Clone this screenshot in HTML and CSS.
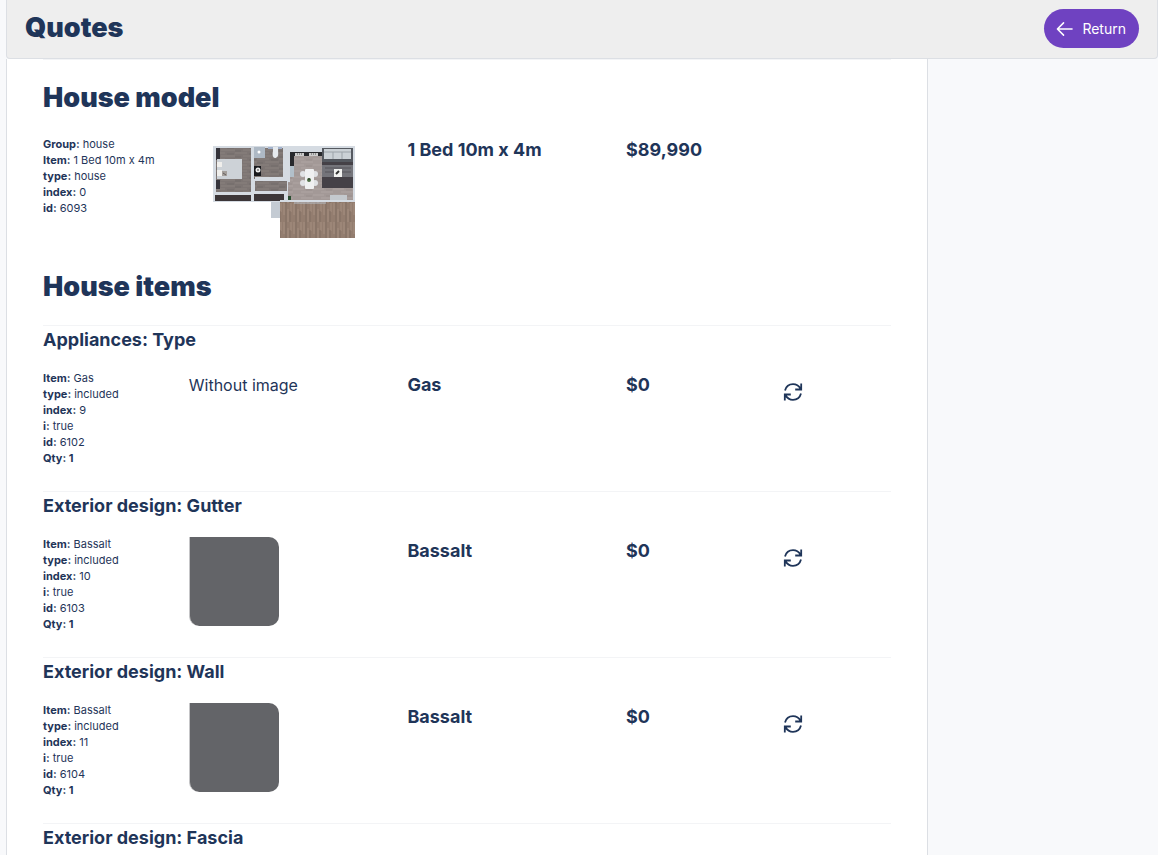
FILE: index.html
```html
<!DOCTYPE html>
<html lang="en">
<head>
<meta charset="utf-8">
<meta name="viewport" content="width=device-width, initial-scale=1">
<title>Quotes</title>
<link rel="stylesheet" href="styles.css">
</head>
<body>
<svg class="defs" aria-hidden="true">
  <symbol id="refresh" viewBox="0 0 20 20">
    <path d="M2 8.500C3 4.800 6 2.200 10 2.200c3.200 0 5.800 1.600 7.500 4.600M18.200 1.500V7.500H12.200M18 11.500C17 15.200 14 17.800 10 17.800c-3.200 0-5.800-1.600-7.500-4.600M1.800 18.500V12.500H7.800" fill="none" stroke="currentColor" stroke-width="1.800"/>
  </symbol>
</svg>
<header class="topbar">
  <h1 class="heading">Quotes</h1>
  <button class="return" type="button">
    <svg class="return-icon" viewBox="0 0 18 16" aria-hidden="true"><path d="M17 8H2M8 1.500 1.500 8 8 14.500" fill="none" stroke="currentColor" stroke-width="1.600" stroke-linecap="round" stroke-linejoin="round"/></svg>
    Return
  </button>
</header>
<main class="panel">
  <section class="model">
    <h2 class="heading">House model</h2>
    <div class="row">
      <ul class="details">
        <li><b>Group:</b> house</li>
        <li><b>Item:</b> 1 Bed 10m x 4m</li>
        <li><b>type:</b> house</li>
        <li><b>index:</b> 0</li>
        <li><b>id:</b> 6093</li>
      </ul>
      <div class="plan-cell">
        <svg class="plan" viewBox="0 0 142 92" role="img" aria-label="Floor plan">
          <defs>
            <pattern id="floor" width="22" height="6" patternUnits="userSpaceOnUse">
              <rect width="22" height="6" fill="#7d7573"/><path d="M0 1h12M8 4h14" stroke="#857d7a" stroke-width="1.500"/><path d="M14 2h7M0 5h6" stroke="#716a68"/>
            </pattern>
            <pattern id="light-floor" width="20" height="6" patternUnits="userSpaceOnUse">
              <rect width="20" height="6" fill="#a39997"/><path d="M0 1h11M8 4h12" stroke="#aba19f" stroke-width="1.500"/><path d="M13 2h6" stroke="#9a908e"/>
            </pattern>
            <pattern id="deck" width="10" height="19" patternUnits="userSpaceOnUse">
              <rect width="10" height="19" fill="#937d6f"/><path d="M1 0v12M5 6v13M8 0v9" stroke="#a58f80"/><path d="M3 0v19M7 8v11" stroke="#806c61"/>
            </pattern>
          </defs>
          <rect x="58" y="56" width="10" height="16" fill="#c4cbd3"/>
          <path d="M0 0H142V56H0Z" fill="#d5dbe2"/>
          <rect x="3" y="2" width="35" height="44" fill="url(#floor)"/>
          <path d="M3 2h4v12H3zM3 34h4v9H3z" fill="#35343b"/>
          <rect x="4" y="13" width="25" height="20" fill="#cdd2d7"/>
          <path d="M4 16h5v5H4zM4 24h5v6H4z" fill="#f0efec"/>
          <path d="M9 25h5v5H9z" fill="#a49f9b"/><path d="M10 27l3 2" stroke="#655f5d"/>
          <rect x="2" y="49" width="37" height="6" fill="#3c3638"/>
          <rect x="41" y="2" width="31" height="31" fill="url(#floor)"/>
          <rect x="41" y="1" width="11" height="11" fill="#aeb9c5"/><circle cx="46" cy="6" r="1.500" fill="#fff"/>
          <rect x="55" y="1" width="14" height="2" fill="#a4b3cc"/><path d="M60 1h5v4c1 5-1 7-3 7s-3-3-2-7z" fill="#e7ebef"/>
          <path d="M41 20h7v10h-7z" fill="#18191d"/><circle cx="45" cy="24" r="2.500" fill="#eee"/><circle cx="45" cy="24" r="1" fill="#777"/>
          <rect x="42" y="35" width="32" height="10" fill="url(#floor)"/>
          <rect x="41" y="48" width="30" height="7" fill="#3c3638"/>
          <path d="M70 0h5v33h-5zM42 31h32v3H42zM38 0h3v56h-3zM72 45h3v11h-3z" fill="#d5dbe2"/>
          <path d="M77 6H140V54H75V36H77Z" fill="url(#light-floor)"/>
          <path d="M77 6h32v4H81v10h-4z" fill="#28292d"/>
          <path d="M77 20h4v11h-4z" fill="#b2c0ca"/>
          <path d="M82 7h9v3h-9zM96 7h9v3h-9z" fill="#ccc"/><path d="M84 8h5M98 8h5" stroke="#555" stroke-dasharray="1"/>
          <rect x="109" y="2" width="31" height="14" fill="#555960"/>
          <rect x="111" y="3" width="27" height="10" fill="#cbd1d6"/><path d="M111 6h27M120 6v7M129 6v7" stroke="#9ca3a9"/>
          <rect x="109" y="16" width="31" height="26" fill="#74747a"/><path d="M109 16h31v3h-31zM109 31h31v11h-31z" fill="#454147"/><path d="M112 22h26M112 26h26" stroke="#65646a" stroke-width="2"/>
          <rect x="121" y="23" width="8" height="8" fill="#f3f3f1"/><path d="M123 28l3-3" stroke="#333" stroke-width="2"/>
          <g fill="#e0e2e5"><circle cx="90" cy="28" r="3"/><circle cx="90" cy="37" r="3"/><circle cx="102" cy="28" r="3"/><circle cx="102" cy="37" r="3"/></g><rect x="92" y="23" width="9" height="20" rx="1" fill="#eff0f1"/>
          <circle cx="96" cy="34" r="2" fill="#4d6d45"/><path d="M95 33h2" stroke="#182d18"/>
          <rect x="117" y="49" width="17" height="5" fill="#c4c9ce"/>
          <rect x="75" y="50" width="3" height="4" fill="#294d30"/>
          <rect x="67" y="56" width="75" height="36" fill="url(#deck)"/>
          <path d="M67 55h75" stroke="#d5dbe2" stroke-width="2"/><path d="M81 57h32" stroke="#b8c0c8"/>
        </svg>
      </div>
      <p class="name">1 Bed 10m x 4m</p>
      <p class="name">$89,990</p>
    </div>
  </section>
  <h2 class="heading items-title">House items</h2>
  <section class="item">
    <h3 class="item-title">Appliances: Type</h3>
    <div class="row">
      <ul class="details">
        <li><b>Item:</b> Gas</li>
        <li><b>type:</b> included</li>
        <li><b>index:</b> 9</li>
        <li><b>i:</b> true</li>
        <li><b>id:</b> 6102</li>
        <li><b>Qty: 1</b></li>
      </ul>
      <p class="no-image">Without image</p>
      <p class="name">Gas</p>
      <p class="name">$0</p>
      <button class="swap" type="button" aria-label="Change item"><svg viewBox="0 0 20 20" aria-hidden="true"><use href="#refresh"/></svg></button>
    </div>
  </section>
  <section class="item">
    <h3 class="item-title">Exterior design: Gutter</h3>
    <div class="row">
      <ul class="details">
        <li><b>Item:</b> Bassalt</li>
        <li><b>type:</b> included</li>
        <li><b>index:</b> 10</li>
        <li><b>i:</b> true</li>
        <li><b>id:</b> 6103</li>
        <li><b>Qty: 1</b></li>
      </ul>
      <div class="swatch" role="img" aria-label="Bassalt"></div>
      <p class="name">Bassalt</p>
      <p class="name">$0</p>
      <button class="swap" type="button" aria-label="Change item"><svg viewBox="0 0 20 20" aria-hidden="true"><use href="#refresh"/></svg></button>
    </div>
  </section>
  <section class="item">
    <h3 class="item-title">Exterior design: Wall</h3>
    <div class="row">
      <ul class="details">
        <li><b>Item:</b> Bassalt</li>
        <li><b>type:</b> included</li>
        <li><b>index:</b> 11</li>
        <li><b>i:</b> true</li>
        <li><b>id:</b> 6104</li>
        <li><b>Qty: 1</b></li>
      </ul>
      <div class="swatch" role="img" aria-label="Bassalt"></div>
      <p class="name">Bassalt</p>
      <p class="name">$0</p>
      <button class="swap" type="button" aria-label="Change item"><svg viewBox="0 0 20 20" aria-hidden="true"><use href="#refresh"/></svg></button>
    </div>
  </section>
  <section class="item">
    <h3 class="item-title">Exterior design: Fascia</h3>
  </section>
</main>
</body>
</html>
```
FILE: styles.css
```css
* { box-sizing: border-box; }
html { overflow: hidden; }
body {
  margin: 0;
  padding-left: 6px;
  height: 100vh;
  overflow: hidden;
  display: flex;
  flex-direction: column;
  background: #f8f9fb;
  color: #1f3559;
  font-family: Inter, "Liberation Sans", sans-serif;
  font-optical-sizing: none;
  font-size: 16px;
}
h1, h2, h3, p, ul { margin: 0; padding: 0; }
.defs { display: none; }
.topbar {
  flex: none;
  display: flex;
  align-items: center;
  justify-content: space-between;
  padding: 8px 18px 10px;
  background: #eee;
  border: 1px solid #dcdfe4;
  border-top: 0;
  border-radius: 0 0 4px 4px;
}
.heading {
  font-size: 27px;
  line-height: 36px;
  font-weight: 900;
}
.return {
  display: flex;
  align-items: center;
  gap: 9px;
  height: 39px;
  margin-top: 1px;
  padding: 0 13px 0 12px;
  border: 0;
  border-radius: 20px;
  background: #6f42c1;
  color: #fff;
  font: 400 14px/20px Inter, "Liberation Sans", sans-serif;
}
.return-icon { width: 17px; height: 16px; }
.panel {
  flex: 1;
  min-height: 0;
  overflow: hidden;
  width: 80%;
  padding: 0 36px;
  background: #fff;
  border: 1px solid #dcdfe4;
  border-width: 0 1px;
}
.model {
  padding-top: 20px;
  border-top: 1px solid #f3f4f6;
}
.row {
  display: grid;
  grid-template-columns: 2fr 3fr 3fr 2fr 2fr;
  align-items: start;
  margin-right: -27px;
}
.model .row { margin-top: 20px; }
.details {
  list-style: none;
  font-size: 11px;
  line-height: 16px;
}
.details b, .name, .item-title { font-weight: 700; }
.name { font-size: 18px; line-height: 28px; }
.no-image { line-height: 28px; }
.plan-cell { padding: 10px 0 0 24px; }
.plan { display: block; width: 142px; height: 92px; }
.items-title { margin: 31px 0 20px; }
.item {
  height: 166px;
  border-top: 1px solid #f3f4f6;
}
.item-title { font-size: 18px; line-height: 28px; }
.item .row { margin-top: 16px; }
.item .name, .no-image { padding-top: 1px; }
.swatch {
  width: 90px;
  height: 89px;
  margin-top: 1px;
  background: #636468;
  border-left: 1px solid #c5c5c7;
  border-radius: 0 10px 10px 10px;
}
.swap {
  width: 42px;
  height: 38px;
  margin: 3px 0 0;
  padding: 9px 11px;
  border: 0;
  background: transparent;
  color: #1f3559;
}
.swap svg { display: block; width: 20px; height: 20px; }
```
